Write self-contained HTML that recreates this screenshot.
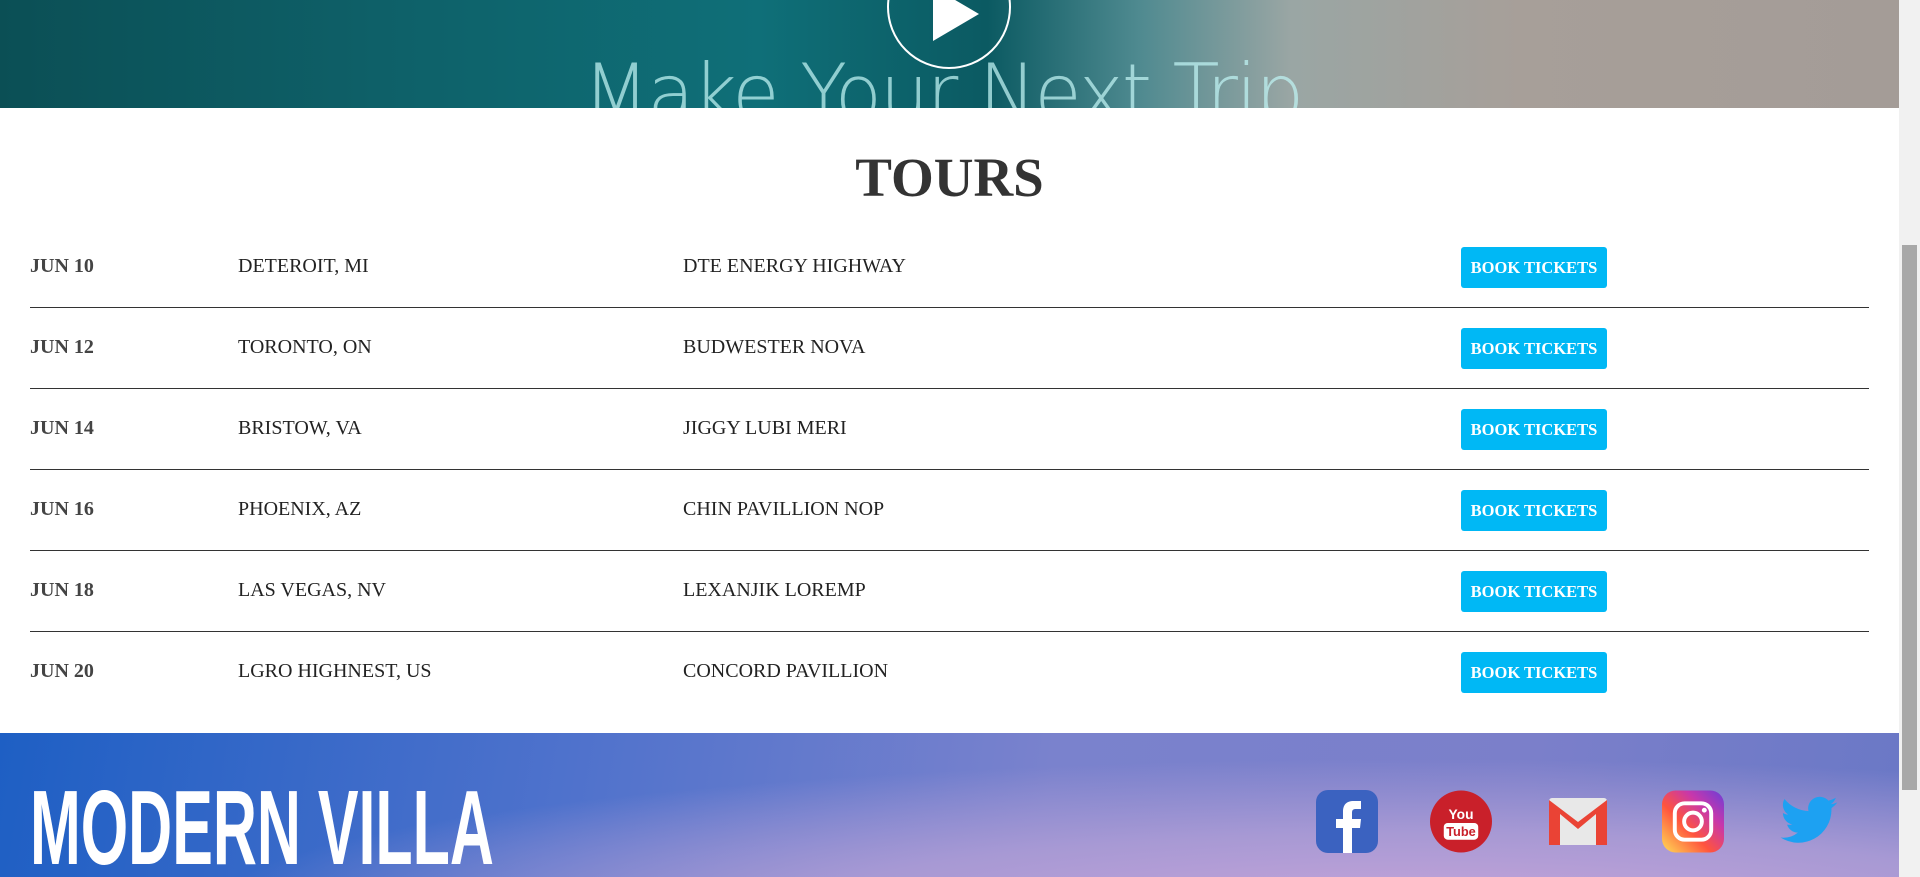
<!DOCTYPE html>
<html><head><meta charset="utf-8"><style>
*{margin:0;padding:0;box-sizing:border-box}
html,body{width:1920px;height:877px;overflow:hidden;background:#fff}
body{position:relative;font-family:"Liberation Serif",serif}
.hero{position:absolute;left:0;top:0;width:1899px;height:108px;overflow:hidden;
background:linear-gradient(90deg,#0b4f55 0%,#0e6068 20%,#0f6f78 40%,#0b5a62 52%,#4f8a90 60%,#9aa6a4 68%,#a79f99 80%,#a49c97 100%)}
.hero .t{position:absolute;left:583px;top:47px;font-family:"DejaVu Sans","Liberation Sans",sans-serif;font-weight:200;font-size:80px;color:rgba(190,240,240,.75);letter-spacing:-2px;white-space:nowrap;transform:scaleX(0.96);transform-origin:left}
.hero .c{position:absolute;left:887px;top:-55px;width:124px;height:124px;border:2px solid #fff;border-radius:50%}
.hero .c:after{content:"";position:absolute;left:44px;top:40px;border-left:46px solid #fff;border-top:27px solid transparent;border-bottom:27px solid transparent}
h1{position:absolute;top:146px;left:0;width:1899px;text-align:center;font-size:55px;color:#333;font-weight:bold}
.row{position:absolute;left:30px;width:1839px;height:52px;font-size:20px;color:#222}
.row.l{border-bottom:1.5px solid #333}
.row span{position:absolute;top:0;line-height:20px}
.d{left:0;font-weight:bold;color:#444}
.ci{left:208px}.v{left:653px}
.b{position:absolute;left:1431px;top:-9px;width:146px;height:41px;background:#00b8f5;color:#fff;border-radius:3px;font-weight:bold;font-size:16.5px;text-align:center;line-height:41px}
.sb{position:absolute;right:0;top:0;width:21px;height:877px;background:#f1f1f1}
.sb i{position:absolute;left:3px;top:245px;width:15px;height:545px;background:#a8a8a8}
.ft{position:absolute;left:0;top:733px;width:1899px;height:144px;
background:radial-gradient(ellipse at 75% 120%,#c5a4d9 0%,#a799d4 30%,transparent 60%),linear-gradient(100deg,#1e5fc4 0%,#4f72cc 30%,#7a82cd 55%,#7b7fca 80%,#6a78c6 100%)}
.logo{position:absolute;left:30px;top:42px;font-family:"Liberation Sans",sans-serif;font-weight:bold;font-size:106px;color:#fff;transform:scaleX(0.575);transform-origin:left;line-height:106px;white-space:nowrap}
.ic{position:absolute;top:57px;width:62px;height:63px}
</style></head><body>
<div class="hero"><div class="t">Make Your Next Trip</div><div class="c"></div></div>
<h1>TOURS</h1>
<div class="row l" style="top:256px"><span class="d">JUN 10</span><span class="ci">DETEROIT, MI</span><span class="v">DTE ENERGY HIGHWAY</span><div class="b">BOOK TICKETS</div></div>
<div class="row l" style="top:337px"><span class="d">JUN 12</span><span class="ci">TORONTO, ON</span><span class="v">BUDWESTER NOVA</span><div class="b">BOOK TICKETS</div></div>
<div class="row l" style="top:418px"><span class="d">JUN 14</span><span class="ci">BRISTOW, VA</span><span class="v">JIGGY LUBI MERI</span><div class="b">BOOK TICKETS</div></div>
<div class="row l" style="top:499px"><span class="d">JUN 16</span><span class="ci">PHOENIX, AZ</span><span class="v">CHIN PAVILLION NOP</span><div class="b">BOOK TICKETS</div></div>
<div class="row l" style="top:580px"><span class="d">JUN 18</span><span class="ci">LAS VEGAS, NV</span><span class="v">LEXANJIK LOREMP</span><div class="b">BOOK TICKETS</div></div>
<div class="row" style="top:661px"><span class="d">JUN 20</span><span class="ci">LGRO HIGHNEST, US</span><span class="v">CONCORD PAVILLION</span><div class="b">BOOK TICKETS</div></div>
<div class="ft">
<div class="logo">MODERN VILLA</div>
<svg class="ic" style="left:1316px" viewBox="0 0 62 63"><rect width="62" height="63" rx="12" fill="#3b62c0"/><path d="M36 63V38h8l1-9h-9v-6c0-3 1-4 4-4h5v-8h-7c-8 0-11 4-11 11v7h-7v9h7v25z" fill="#fff"/></svg>
<svg class="ic" style="left:1430px" viewBox="0 0 63 63"><circle cx="31.5" cy="31.5" r="31.5" fill="#c9202a"/><text x="31.5" y="29" text-anchor="middle" font-family="Liberation Sans" font-weight="bold" font-size="14" fill="#fff">You</text><rect x="14" y="33" width="35" height="17" rx="4" fill="#fff"/><text x="31.5" y="46" text-anchor="middle" font-family="Liberation Sans" font-weight="bold" font-size="13" fill="#c9202a">Tube</text></svg>
<svg class="ic" style="left:1547px" viewBox="0 0 62 63"><rect x="2" y="8" width="58" height="47" rx="3" fill="#e8e8e8"/><path d="M2 10v45h11V24l18 15 18-15v31h11V10l-29 22z" fill="#ea4335"/></svg>
<svg class="ic" style="left:1662px" viewBox="0 0 63 63"><defs><linearGradient id="ig" x1="0" y1="1" x2="1" y2="0"><stop offset="0" stop-color="#fd5"/><stop offset=".4" stop-color="#ff543e"/><stop offset=".7" stop-color="#c837ab"/><stop offset="1" stop-color="#6a3fd8"/></linearGradient></defs><rect width="63" height="63" rx="14" fill="url(#ig)"/><rect x="13" y="13" width="37" height="37" rx="10" fill="none" stroke="#fff" stroke-width="4"/><circle cx="31.5" cy="31.5" r="9" fill="none" stroke="#fff" stroke-width="4"/><circle cx="43" cy="20" r="2.5" fill="#fff"/></svg>
<svg class="ic" style="left:1778px" viewBox="0 0 24 24"><path fill="#1da1f2" d="M23 4.6c-.8.4-1.7.6-2.6.7.9-.6 1.6-1.4 2-2.5-.9.5-1.9.9-2.9 1.1A4.5 4.5 0 0 0 11.8 8 12.8 12.8 0 0 1 2.5 3.3a4.5 4.5 0 0 0 1.4 6c-.7 0-1.4-.2-2-.6 0 2.2 1.6 4 3.6 4.4-.7.2-1.4.2-2 .1.6 1.8 2.3 3.1 4.2 3.1A9 9 0 0 1 1 18.2 12.8 12.8 0 0 0 20.7 7.4v-.6c.9-.6 1.7-1.4 2.3-2.2z"/></svg>
</div>
<div class="sb"><i></i></div>
</body></html>
